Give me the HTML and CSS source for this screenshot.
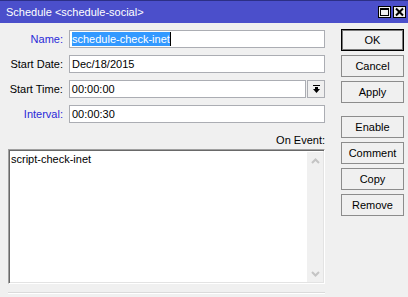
FILE: index.html
```html
<!DOCTYPE html>
<html lang="en">
<head>
  <meta charset="UTF-8" />
  <title>Schedule &lt;schedule-social&gt;</title>
  <link rel="stylesheet" href="styles.css">
</head>
<body>
  <div class="window">
    <div class="titlebar">
      <span class="title">Schedule &lt;schedule-social&gt;</span>
      <div class="controls">
        <span class="ctl">
          <svg width="11" height="10" viewBox="0 0 11 10"><rect x="1.5" y="1.5" width="8" height="7" fill="none" stroke="#000" stroke-width="1"/><line x1="1" y1="2" x2="10" y2="2" stroke="#000" stroke-width="2"/></svg>
        </span>
        <span class="ctl">
          <svg width="11" height="10" viewBox="0 0 11 10"><path d="M2 1.5 L9 8.5 M9 1.5 L2 8.5" stroke="#000" stroke-width="2"/></svg>
        </span>
      </div>
    </div>

    <div class="content">
      <div class="form">
        <div class="row">
          <label class="lbl blue">Name:</label>
          <div class="field"><span class="sel">schedule-check-inet</span><span class="caret"></span></div>
        </div>
        <div class="row">
          <label class="lbl">Start Date:</label>
          <div class="field">Dec/18/2015</div>
        </div>
        <div class="row">
          <label class="lbl">Start Time:</label>
          <div class="field short">00:00:00</div>
          <div class="drop">
            <svg width="9" height="9" viewBox="0 0 9 9"><rect x="1" y="0" width="7" height="1" fill="#000"/><path d="M3 2 H6 V4 H8 L4.5 8 L1 4 H3 Z" fill="#000"/></svg>
          </div>
        </div>
        <div class="row">
          <label class="lbl blue">Interval:</label>
          <div class="field">00:00:30</div>
        </div>

        <div class="event-label">On Event:</div>
        <div class="editor">
          <div class="editor-text">script-check-inet</div>
          <div class="scroll">
            <svg width="9" height="6" viewBox="0 0 9 6"><path d="M1 5 L4.5 1.5 L8 5" fill="none" stroke="#c4c4c4" stroke-width="2"/></svg>
            <svg width="9" height="6" viewBox="0 0 9 6"><path d="M1 1 L4.5 4.5 L8 1" fill="none" stroke="#c4c4c4" stroke-width="2"/></svg>
          </div>
        </div>
        <div class="separator"></div>
      </div>

      <div class="buttons">
        <button class="btn default">OK</button>
        <button class="btn">Cancel</button>
        <button class="btn">Apply</button>
        <button class="btn gap">Enable</button>
        <button class="btn">Comment</button>
        <button class="btn">Copy</button>
        <button class="btn">Remove</button>
      </div>
    </div>
  </div>
</body>
</html>
```

FILE: styles.css
```css
body {
  margin: 0;
  background-color: #f0f0f0;
  font-family: "Liberation Sans", Arial, sans-serif;
  font-size: 11px;
  color: #000;
}
.window {
  width: 408px;
  height: 297px;
  overflow: hidden;
}
.titlebar {
  border-top: 1px solid #2c2f86;
  background-color: #4b4fcb;
  display: flex;
  align-items: center;
  justify-content: space-between;
  padding: 0 2px 0 6px;
  box-sizing: border-box;
  height: 23px;
}
.title {
  color: #fff;
  font-size: 11px;
  margin-top: -1px;
}
.controls {
  display: flex;
  gap: 2px;
}
.ctl {
  width: 13px;
  height: 12px;
  background-color: #f0f0f0;
  border: 1px solid #000;
  box-sizing: border-box;
  display: flex;
  align-items: center;
  justify-content: center;
}
.content {
  display: flex;
  padding: 7px 0 0 8px;
}
.form {
  width: 317px;
  display: flex;
  flex-direction: column;
}
.row {
  display: flex;
  align-items: center;
  height: 18px;
  margin-bottom: 7px;
}
.lbl {
  width: 55px;
  text-align: right;
  margin-right: 6px;
}
.blue {
  color: #2a2ad8;
}
.field {
  width: 256px;
  height: 18px;
  box-sizing: border-box;
  background-color: #fff;
  border: 1px solid #abadb3;
  padding: 0 0 0 2px;
  display: flex;
  align-items: center;
  white-space: nowrap;
}
.field.short {
  width: 238px;
}
.sel {
  background-color: #3399ff;
  color: #fff;
  line-height: 14px;
}
.caret {
  width: 1px;
  height: 14px;
  background-color: #000;
}
.drop {
  width: 18px;
  height: 18px;
  box-sizing: border-box;
  border: 1px solid #abadb3;
  background-color: #f0f0f0;
  margin-left: 1px;
  display: flex;
  align-items: center;
  justify-content: center;
}
.event-label {
  text-align: right;
  margin-top: 4px;
  height: 15px;
}
.editor {
  height: 135px;
  box-sizing: border-box;
  border-top: 1px solid #a0a0a0;
  border-left: 1px solid #a0a0a0;
  border-right: 1px solid #fff;
  border-bottom: 1px solid #fff;
  box-shadow: inset 1px 1px 0 #696969, inset -1px -1px 0 #e3e3e3;
  background-color: #fff;
  display: flex;
  justify-content: space-between;
}
.editor-text {
  padding: 3px 0 0 2px;
}
.scroll {
  width: 16px;
  margin: 2px 1px 1px 0;
  background-color: #f0f0f0;
  display: flex;
  flex-direction: column;
  justify-content: space-between;
  align-items: center;
  padding: 6px 0 5px;
  box-sizing: border-box;
}
.separator {
  margin-top: 8px;
  height: 1px;
  background-color: #dadada;
  border-bottom: 1px solid #fff;
}
.buttons {
  display: flex;
  flex-direction: column;
  gap: 4px;
  margin-left: 16px;
  margin-top: -1px;
}
.btn {
  width: 63px;
  height: 22px;
  box-sizing: border-box;
  border: 1px solid #8c8c8c;
  background-color: #f0f0f0;
  font-family: "Liberation Sans", Arial, sans-serif;
  font-size: 11px;
  color: #000;
  padding: 0;
}
.btn.default {
  border: 1px solid #000;
  box-shadow: inset 0 0 0 1px #7a7a7a;
}
.btn.gap {
  margin-top: 9px;
}
```
